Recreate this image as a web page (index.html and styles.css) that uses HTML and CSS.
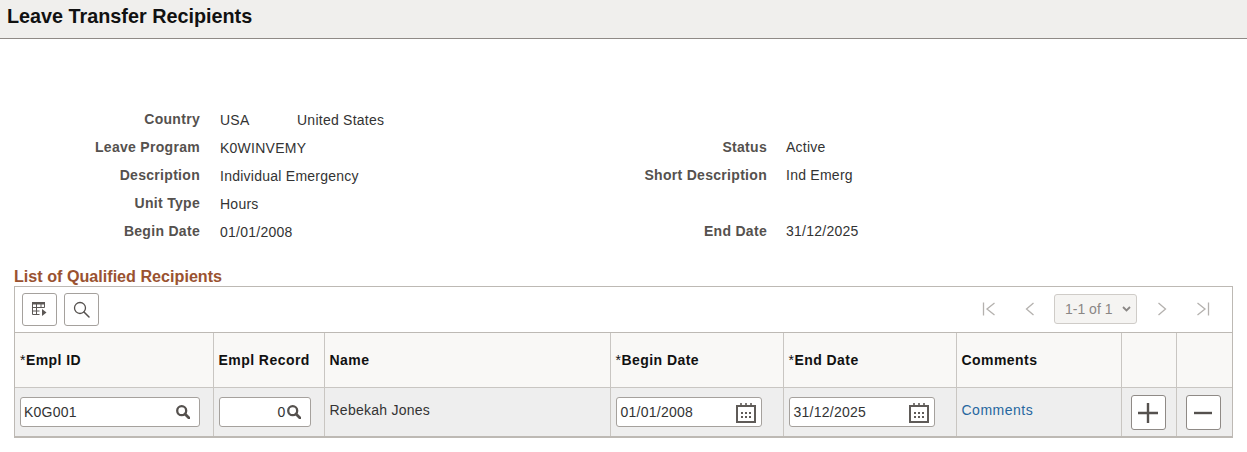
FILE: index.html
```html
<!DOCTYPE html>
<html lang="en">
<head>
    <meta charset="UTF-8">
    <meta name="viewport" content="width=device-width, initial-scale=1.0">
    <title>Leave Transfer Recipients</title>
    <link rel="stylesheet" href="styles.css">
</head>
<body>
    <svg class="defs" width="0" height="0">
        <symbol id="icon-search" viewBox="0 0 14 14">
            <circle cx="5.700" cy="5.700" r="4.500" fill="none" stroke="currentColor" stroke-width="2.300"/>
            <path d="M9 9l4 4" fill="none" stroke="currentColor" stroke-width="2.800" stroke-linecap="round"/>
        </symbol>
        <symbol id="icon-calendar" viewBox="0 0 20 21">
            <path d="M1 4h18v16H1z" fill="none" stroke="currentColor" stroke-width="2"/>
            <path d="M5 1v4M10 1v4M15 1v4" stroke="currentColor" stroke-width="1.600"/>
            <path d="M5 10h2v2H5zM9 10h2v2H9zM13 10h2v2h-2zM5 14h2v2H5zM9 14h2v2H9zM13 14h2v2h-2z" fill="currentColor"/>
        </symbol>
    </svg>

    <header class="page-title">
        <h1>Leave Transfer Recipients</h1>
    </header>

    <section class="details">
        <div class="label">Country</div>
        <div class="value country"><span>USA</span><span>United States</span></div>
        <div></div>
        <div></div>

        <div class="label">Leave Program</div>
        <div class="value">K0WINVEMY</div>
        <div class="label">Status</div>
        <div class="value">Active</div>

        <div class="label">Description</div>
        <div class="value">Individual Emergency</div>
        <div class="label">Short Description</div>
        <div class="value">Ind Emerg</div>

        <div class="label">Unit Type</div>
        <div class="value">Hours</div>
        <div></div>
        <div></div>

        <div class="label">Begin Date</div>
        <div class="value">01/01/2008</div>
        <div class="label">End Date</div>
        <div class="value">31/12/2025</div>
    </section>

    <h2 class="grid-title">List of Qualified Recipients</h2>

    <section class="grid-box">
        <div class="toolbar">
            <button class="tool-btn" type="button" aria-label="Personalize">
                <svg width="17" height="16" viewBox="0 0 17 16">
                    <path d="M1 1h13v2.500H1z" fill="#5c5856"/>
                    <path d="M1.500 3v10.500h7M1.500 6.500h12M1.500 10h7M5.500 3v10.500M10 3v4M13.500 3v3.500" fill="none" stroke="#5c5856" stroke-width="1"/>
                    <path d="M11 8l4.500 3.500L11 15z" fill="#5c5856"/>
                </svg>
            </button>
            <button class="tool-btn" type="button" aria-label="Find">
                <svg width="17" height="17" viewBox="0 0 17 17">
                    <circle cx="7" cy="7" r="5.500" fill="none" stroke="#55514e" stroke-width="1.300"/>
                    <path d="M11 11l5 5" stroke="#55514e" stroke-width="1.500" stroke-linecap="round"/>
                </svg>
            </button>
            <div class="pager">
                <svg class="pager-icon" width="14" height="14" viewBox="0 0 14 14"><path d="M1.500 0.500v13M12.500 1L5 7l7.500 6" fill="none" stroke="#b4b1ae" stroke-width="1.300"/></svg>
                <svg class="pager-icon" width="10" height="14" viewBox="0 0 10 14"><path d="M8.500 1L1.500 7l7 6" fill="none" stroke="#b4b1ae" stroke-width="1.300"/></svg>
                <div class="pager-select">1-1 of 1
                    <svg width="9" height="6" viewBox="0 0 9 6"><path d="M1 1l3.500 3.500L8 1" fill="none" stroke="#8a8785" stroke-width="1.800"/></svg>
                </div>
                <svg class="pager-icon" width="10" height="14" viewBox="0 0 10 14"><path d="M1.500 1l7 6-7 6" fill="none" stroke="#b4b1ae" stroke-width="1.300"/></svg>
                <svg class="pager-icon" width="14" height="14" viewBox="0 0 14 14"><path d="M12.500 0.500v13M1.500 1L9 7l-7.500 6" fill="none" stroke="#b4b1ae" stroke-width="1.300"/></svg>
            </div>
        </div>

        <table class="recipients">
            <colgroup>
                <col class="col-id">
                <col class="col-record">
                <col class="col-name">
                <col class="col-date">
                <col class="col-date">
                <col class="col-comments">
                <col class="col-action">
                <col class="col-last">
            </colgroup>
            <thead>
                <tr>
                    <th><span class="req">*</span>Empl ID</th>
                    <th>Empl Record</th>
                    <th>Name</th>
                    <th><span class="req">*</span>Begin Date</th>
                    <th><span class="req">*</span>End Date</th>
                    <th>Comments</th>
                    <th></th>
                    <th></th>
                </tr>
            </thead>
            <tbody>
                <tr>
                    <td>
                        <div class="field field-id">
                            <span>K0G001</span>
                            <svg class="icon-search" width="14" height="14"><use href="#icon-search"/></svg>
                        </div>
                    </td>
                    <td>
                        <div class="field field-record">
                            <span>0</span>
                            <svg class="icon-search" width="14" height="14"><use href="#icon-search"/></svg>
                        </div>
                    </td>
                    <td>Rebekah Jones</td>
                    <td>
                        <div class="field field-date">
                            <span>01/01/2008</span>
                            <svg class="icon-cal" width="20" height="21"><use href="#icon-calendar"/></svg>
                        </div>
                    </td>
                    <td>
                        <div class="field field-date">
                            <span>31/12/2025</span>
                            <svg class="icon-cal" width="20" height="21"><use href="#icon-calendar"/></svg>
                        </div>
                    </td>
                    <td><a class="link" href="#">Comments</a></td>
                    <td>
                        <button class="row-btn" type="button" aria-label="Add row">
                            <svg width="20" height="20" viewBox="0 0 20 20"><path d="M10 0v20M0 10h20" stroke="#55514e" stroke-width="2.400"/></svg>
                        </button>
                    </td>
                    <td>
                        <button class="row-btn" type="button" aria-label="Delete row">
                            <svg width="20" height="20" viewBox="0 0 20 20"><path d="M1 10h18" stroke="#55514e" stroke-width="2.400"/></svg>
                        </button>
                    </td>
                </tr>
            </tbody>
        </table>
    </section>
</body>
</html>
```

FILE: styles.css
```css
* {
    box-sizing: border-box;
}

body {
    margin: 0;
    font-family: "Liberation Sans", Arial, sans-serif;
    font-size: 14px;
    letter-spacing: 0.25px;
    color: #333;
    background-color: #fff;
}

.defs {
    display: block;
    height: 0;
}

.page-title {
    height: 39px;
    padding: 6px 7px 0;
    background-color: #f0efed;
    border-bottom: 1px solid #8f8a86;
}

.page-title h1 {
    margin: 0;
    font-size: 19.800px;
    line-height: 20px;
    letter-spacing: 0;
    color: #111;
}

.details {
    display: grid;
    grid-template-columns: 200px 347px 220px 1fr;
    grid-auto-rows: 28px;
    align-items: center;
    margin-top: 66px;
}

.label {
    font-weight: bold;
    letter-spacing: 0.3px;
    color: #55514e;
    text-align: right;
}

.value {
    padding: 1px 0 0 20px;
}

.details .value:nth-child(4n) {
    padding: 0 0 0 19px;
}

.country span:first-child {
    display: inline-block;
    width: 77px;
}

.grid-title {
    margin: 22px 0 0 14px;
    font-size: 16.150px;
    line-height: 19px;
    letter-spacing: 0;
    color: #9a5230;
}

.grid-box {
    width: 1219px;
    margin-left: 14px;
    border: 1px solid #bdb9b4;
    border-bottom: 2px solid #bdb9b4;
}

.toolbar {
    display: flex;
    align-items: center;
    gap: 7px;
    height: 46px;
    padding: 0 7px 1px;
    border-bottom: 1px solid #bdb9b4;
}

.tool-btn {
    display: flex;
    align-items: center;
    justify-content: center;
    width: 35px;
    height: 33px;
    padding: 0;
    background-color: #fff;
    border: 1px solid #a5a19d;
    border-radius: 3px;
}

.pager {
    display: flex;
    align-items: center;
    margin-left: auto;
    margin-right: 15px;
}

.pager-icon:nth-child(1) {
    margin-right: 29px;
}

.pager-icon:nth-child(2) {
    margin-right: 19px;
}

.pager-icon:nth-child(4) {
    margin-left: 20px;
}

.pager-icon:nth-child(5) {
    margin-left: 29px;
}

.pager-select {
    display: flex;
    align-items: center;
    justify-content: space-between;
    width: 83px;
    height: 30px;
    padding: 0 5px 0 10px;
    letter-spacing: 0;
    color: #8a8785;
    background-color: #f5f4f2;
    border: 1px solid #cfccc8;
    border-radius: 3px;
}

.recipients {
    width: 100%;
    table-layout: fixed;
    border-collapse: collapse;
}

.col-id { width: 198px; }
.col-record { width: 111px; }
.col-name { width: 286px; }
.col-date { width: 173px; }
.col-comments { width: 165px; }
.col-action { width: 55px; }
.col-last { width: 56px; }

.recipients th,
.recipients td {
    padding: 0 5px;
    text-align: left;
    border-right: 1px solid #c9c6c2;
}

.recipients th:last-child,
.recipients td:last-child {
    border-right: none;
}

.recipients th {
    height: 54px;
    padding-top: 1px;
    letter-spacing: 0.45px;
    color: #111;
    background-color: #f9f8f6;
    border-bottom: 1px solid #c9c6c2;
}

.recipients td {
    height: 49px;
    padding-bottom: 4px;
    background-color: #eeeeee;
}

.req {
    font-weight: normal;
}

.field {
    display: flex;
    align-items: center;
    justify-content: space-between;
    height: 30px;
    margin-top: 5px;
    padding: 0 3px;
    color: #333;
    background-color: #fff;
    border: 1px solid #a5a19d;
    border-radius: 3px;
}

.field-id {
    width: 180px;
    padding-right: 9px;
}

.field-record {
    width: 92px;
    justify-content: flex-end;
    gap: 1px;
    padding-right: 9px;
}

.field-date {
    width: 146px;
    padding: 0 5px 0 4px;
}

.icon-search {
    color: #55514e;
}

.icon-cal {
    color: #5f5b58;
}

.link {
    letter-spacing: 0.5px;
    color: #26679f;
    text-decoration: none;
}

.row-btn {
    display: flex;
    align-items: center;
    justify-content: center;
    width: 35px;
    height: 35px;
    margin: 6px 0 0 4px;
    padding: 0;
    background-color: #fff;
    border: 1px solid #8f8a86;
    border-radius: 3px;
}
```
